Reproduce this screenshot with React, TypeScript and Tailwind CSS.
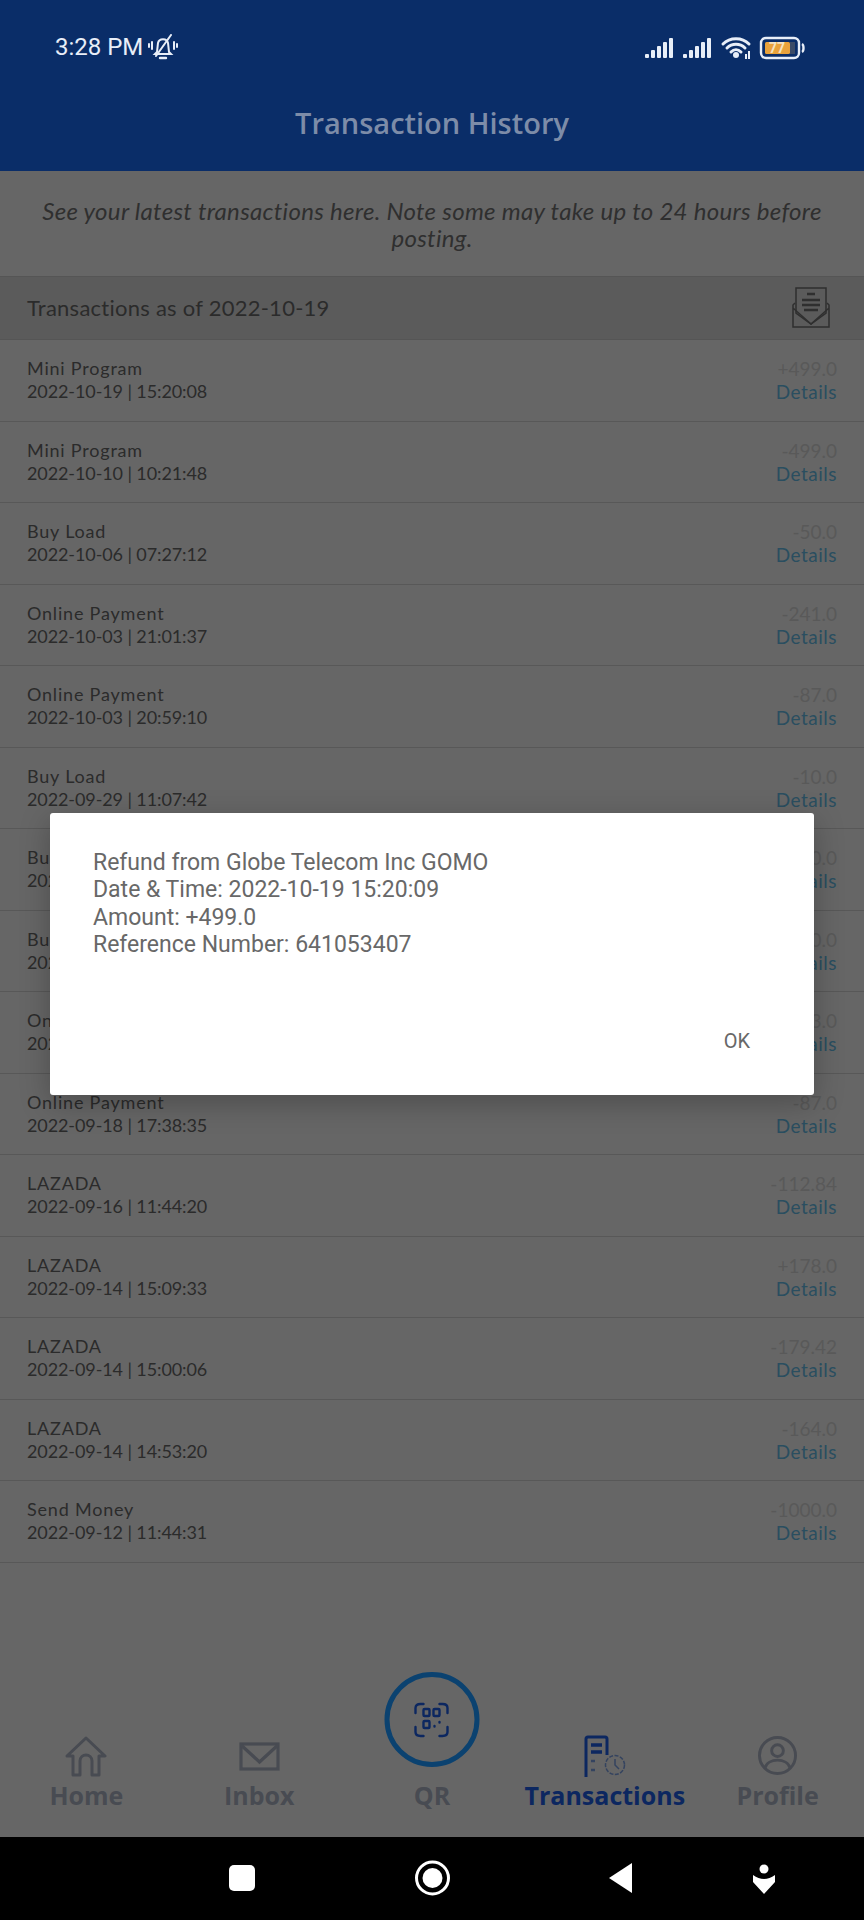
import React from 'react';

const rows = [
  ['Mini Program', '2022-10-19 | 15:20:08', '+499.0'],
  ['Mini Program', '2022-10-10 | 10:21:48', '-499.0'],
  ['Buy Load', '2022-10-06 | 07:27:12', '-50.0'],
  ['Online Payment', '2022-10-03 | 21:01:37', '-241.0'],
  ['Online Payment', '2022-10-03 | 20:59:10', '-87.0'],
  ['Buy Load', '2022-09-29 | 11:07:42', '-10.0'],
  ['Buy Load', '2022-09-27 | 10:12:30', '-50.0'],
  ['Buy Load', '2022-09-24 | 09:41:16', '-50.0'],
  ['Online Payment', '2022-09-20 | 18:02:51', '-153.0'],
  ['Online Payment', '2022-09-18 | 17:38:35', '-87.0'],
  ['LAZADA', '2022-09-16 | 11:44:20', '-112.84'],
  ['LAZADA', '2022-09-14 | 15:09:33', '+178.0'],
  ['LAZADA', '2022-09-14 | 15:00:06', '-179.42'],
  ['LAZADA', '2022-09-14 | 14:53:20', '-164.0'],
  ['Send Money', '2022-09-12 | 11:44:31', '-1000.0'],
];

const StatusIcons = () => (
  <svg width="160" height="26" viewBox="0 0 160 26" fill="none" className="mt-[5px]">
    <g fill="#e8eef8">
      <rect x="0" y="19" width="4" height="4" rx="1" />
      <rect x="6" y="15" width="4" height="8" rx="1" />
      <rect x="12" y="11" width="4" height="12" rx="1" />
      <rect x="18" y="7" width="4" height="16" rx="1" />
      <rect x="24" y="3" width="4" height="20" rx="1" />
      <rect x="38" y="19" width="4" height="4" rx="1" />
      <rect x="44" y="15" width="4" height="8" rx="1" />
      <rect x="50" y="11" width="4" height="12" rx="1" />
      <rect x="56" y="7" width="4" height="16" rx="1" />
      <rect x="62" y="3" width="4" height="20" rx="1" />
      <circle cx="91" cy="20" r="3" />
      <rect x="100" y="19" width="2" height="5" />
      <rect x="103" y="16" width="2" height="8" />
    </g>
    <g stroke="#e8eef8" strokeWidth="3" strokeLinecap="round">
      <path d="M78 9 C85 2 97 2 104 9" />
      <path d="M82 13 C87 8 95 8 100 13" />
      <path d="M86 17 C89 14 93 14 96 17" />
    </g>
    <rect x="116" y="3" width="38" height="20" rx="5" stroke="#e8eef8" strokeWidth="2.400" />
    <rect x="120" y="7" width="25" height="12" rx="1.500" fill="#e9a23b" />
    <rect x="145" y="7" width="5" height="12" fill="#3a4a66" />
    <text x="132" y="18" textAnchor="middle" fontSize="14" fontWeight="700" fontFamily="Roboto, sans-serif" fill="#f4e3c0">77</text>
    <path d="M157 9 C159 10 159 16 157 17" stroke="#e8eef8" strokeWidth="2.400" />
  </svg>
);

const BellOff = () => (
  <svg width="30" height="26" viewBox="0 0 30 26" fill="none" stroke="#e8eef8" strokeWidth="2" strokeLinecap="round">
    <path d="M9 18 L10 9 C11 4 19 4 20 9 L21 18 L23 20 L7 20 Z" />
    <path d="M12 24 L18 24" strokeWidth="2.400" />
    <path d="M23 1 L8 22" />
    <path d="M4 8 V15 M1 10 V13 M26 8 V15 M29 10 V13" />
  </svg>
);

const ReportIcon = () => (
  <svg width="38" height="41" viewBox="0 0 38 41" fill="none" stroke="#2f2f2f" strokeWidth="1.500">
    <path d="M4 26 V1 H34 V26 L19 37 Z" />
    <path d="M3 16 L1 18 V40 H37 V18 L35 16 M1 21 L19 37 L37 21" />
    <path d="M15 7 H23 M10 13 H28 M10 18 H28 M12 23 H26" strokeWidth="2.400" />
  </svg>
);

const navIcon = 'h-[48px] flex items-end justify-center';

const Nav = () => (
  <nav className="relative h-[118px] shrink-0 pt-[10px] grid grid-cols-5 font-['Open_Sans',sans-serif] font-bold text-[25px] text-[#484b52]">
    <div className="flex flex-col items-center">
      <div className={navIcon}>
        <svg width="42" height="41" viewBox="0 0 42 41" fill="none" stroke="#484b52" strokeWidth="3" strokeLinejoin="round">
          <path d="M2 20 L21 2 L40 20 H34 V39 H27 V25 C27 17 15 17 15 25 V39 H8 V20 Z" />
        </svg>
      </div>
      <span className="mt-[3px] leading-[30px]">Home</span>
    </div>
    <div className="flex flex-col items-center">
      <div className={navIcon}>
        <svg width="41" height="29" viewBox="0 0 41 29" fill="none" stroke="#484b52" strokeWidth="3.200" className="mb-[6px]">
          <rect x="2" y="2" width="37" height="25" />
          <path d="M2 3 L20.500 20 L39 3" />
        </svg>
      </div>
      <span className="mt-[3px] leading-[30px]">Inbox</span>
    </div>
    <div className="relative flex flex-col items-center justify-end">
      <div className="absolute left-1/2 -translate-x-1/2 top-[-57px] w-[95px] h-[95px] rounded-full border-[5px] border-[#0b4270] flex items-center justify-center">
        <svg width="36" height="36" viewBox="0 0 36 36" fill="none" stroke="#0c2760" strokeWidth="2.400" strokeLinecap="round">
          <path d="M2 11 V6 Q2 2 7 2 H10 M26 2 H29 Q34 2 34 6 V11 M2 25 V30 Q2 34 7 34 H10 M26 34 H29 Q34 34 34 30 V25" />
          <rect x="10" y="7" width="6" height="7" rx="1" />
          <rect x="20" y="7" width="6" height="7" rx="1" />
          <rect x="10" y="19" width="6" height="7" rx="1" />
          <path d="M21 24 V24.500 M26 20 V20.500" />
        </svg>
      </div>
      <span className="mb-[27px] leading-[30px]">QR</span>
    </div>
    <div className="flex flex-col items-center text-[#0c2760]">
      <div className={navIcon}>
        <svg width="42" height="42" viewBox="0 0 42 42" fill="none" stroke="#0c2760" strokeWidth="3">
          <path d="M2 42 V4 Q2 2 4 2 H21 Q23 2 23 4 V20" />
          <path d="M7 10 H18 M7 17 H18" strokeWidth="3.500" />
          <path d="M7 26 H11 M7 35 H11" strokeWidth="2.500" stroke="#34435f" />
          <circle cx="31" cy="30" r="9.500" strokeWidth="1.500" stroke="#34435f" strokeDasharray="4 1.500" />
          <path d="M31 24 V30 L35 34" strokeWidth="1.500" stroke="#34435f" />
        </svg>
      </div>
      <span className="mt-[3px] leading-[30px]">Transactions</span>
    </div>
    <div className="flex flex-col items-center">
      <div className={navIcon}>
        <svg width="41" height="39" viewBox="0 0 42 40" fill="none" stroke="#484b52" strokeWidth="3" className="mb-[2px]">
          <circle cx="21" cy="20" r="18.500" />
          <circle cx="21" cy="15" r="6" />
          <path d="M8 33 C11 22 31 22 34 33" />
        </svg>
      </div>
      <span className="mt-[3px] leading-[30px]">Profile</span>
    </div>
  </nav>
);

export default function App() {
  return (
    <div className="relative w-[864px] h-[1920px] overflow-hidden flex flex-col bg-[#666666] font-['Roboto',sans-serif]">
      <header className="h-[171px] bg-[#0a2d68] shrink-0 flex flex-col">
        <div className="h-[105px] pl-[55px] pr-[59px] pt-[30px] flex justify-between items-start">
          <div className="flex items-center gap-[5px] text-[#e8eef8] text-[24px] leading-[34px]">
            <span>3:28 PM</span>
            <BellOff />
          </div>
          <StatusIcons />
        </div>
        <h1 className="text-center text-[#7d8ca8] text-[29px] leading-[36px] font-semibold font-['Open_Sans',sans-serif]">Transaction History</h1>
      </header>

      <p className="h-[105px] shrink-0 pt-[26px] px-[40px] text-center italic text-[24px] tracking-[0.3px] leading-[27px] text-[#2f2f2f] font-['Lato',sans-serif]">
        See your latest transactions here. Note some may take up to 24 hours before posting.
      </p>

      <div className="h-[64px] shrink-0 bg-[#5b5b5b] border-y border-[#555555] pl-[27px] pr-[34px] pb-[2px] flex items-center justify-between">
        <span className="text-[22px] text-[#2b2b2b] font-['Lato',sans-serif] tracking-[0.25px]">Transactions as of 2022-10-19</span>
        <ReportIcon />
      </div>

      <ul className="shrink-0 font-['Lato',sans-serif]">
        {rows.map((r) => (
          <li key={r[1]} className="h-[81.5px] border-b border-[#585858] pl-[27px] pr-[27px] pt-[17px] flex justify-between">
            <div className="text-[18px] leading-[23px] text-[#2b2b2b]">
              <div className="tracking-[0.8px]">{r[0]}</div>
              <div className="tracking-[-0.1px]">{r[1]}</div>
            </div>
            <div className="text-[19px] leading-[23px] text-right">
              <div className="text-[#595959]">{r[2]}</div>
              <div className="text-[#2a4e60] tracking-[0.5px]">Details</div>
            </div>
          </li>
        ))}
      </ul>

      <div className="flex-1" />
      <Nav />

      <div className="h-[83px] shrink-0 bg-black flex items-center">
        <svg width="864" height="83" viewBox="0 0 864 83" fill="#fff">
          <rect x="229" y="28" width="26" height="26" rx="5" />
          <circle cx="432.500" cy="41" r="16" fill="none" stroke="#fff" strokeWidth="3" />
          <circle cx="432.500" cy="41" r="10" />
          <path d="M632 26 V56 L609 41 Z" />
          <circle cx="764" cy="32" r="4.500" />
          <path d="M753 38 Q764 46 775 38 V45 L764 57 L753 45 Z" />
        </svg>
      </div>

      <div className="absolute left-[50px] top-[813px] w-[764px] h-[282px] bg-white rounded-[3px] shadow-[0_8px_30px_rgba(0,0,0,0.25)] text-[#686868]">
        <div className="pt-[36px] pl-[43px] text-[23px] leading-[27.3px]">
          <div>Refund from Globe Telecom Inc GOMO</div>
          <div>Date &amp; Time: 2022-10-19 15:20:09</div>
          <div>Amount: +499.0</div>
          <div>Reference Number: 641053407</div>
        </div>
        <button type="button" className="absolute right-[64px] bottom-[40px] text-[20px] leading-[28px]">OK</button>
      </div>
    </div>
  );
}
